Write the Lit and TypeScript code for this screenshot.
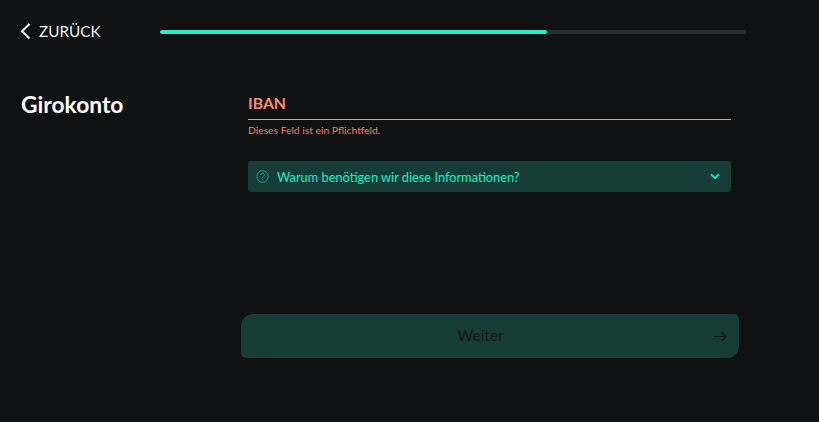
import { LitElement, html, css } from "lit";
import { customElement } from "lit/decorators.js";

@customElement("app-root")
export class AppRoot extends LitElement {
  static styles = css`
    :host { display: block; width: 819px; height: 422px; background: #0f1113; overflow: hidden; font-family: "Lato", "Noto Sans", sans-serif; color: #fff; }
    .top { display: flex; align-items: center; height: 34px; padding: 14px 0 0 20px; }
    .back { display: flex; align-items: center; gap: 8px; width: 140px; font-size: 15.3px; color: #f2f2f2; }
    .back svg { display: block; }
    .track { width: 586px; height: 4px; background: #2b2f2e; border-radius: 2px; margin-top: 2px; }
    .fill { width: 387px; height: 4px; background: #2cecc8; border-radius: 2px; }
    .main { display: flex; padding: 41px 0 0 21px; }
    h1 { margin: 0; width: 227px; font-size: 22.8px; line-height: 30px; font-weight: 700; color: #fff; }
    .form { width: 483px; }
    .label { height: 31px; padding-top: 3px; box-sizing: border-box; border-bottom: 1px solid #f59a80; font-size: 15.8px; line-height: 22px; font-weight: 700; color: #f98d6f; }
    .err { font-size: 10.3px; line-height: 12px; margin-top: 4px; color: #ff7a55; }
    .info { display: flex; align-items: center; height: 31px; margin-top: 25px; padding: 0 11px 0 8px; background: #153c37; border-radius: 3px; color: #16eec8; font-size: 12.8px; }
    .info .q { margin-right: 8px; display: block; }
    .info span { flex: 1; }
    .btn { display: flex; align-items: center; width: 498px; height: 44px; margin: 122px 0 0 241px; padding: 0 12px 0 0; box-sizing: border-box; background: #153c37; border-radius: 12px 5px 12px 5px; color: #15171a; font-size: 15.5px; line-height: 42px; }
    .btn span { flex: 1; text-align: center; padding: 0 0 2px 6px; }
  `;
  render() {
    return html`
      <div class="top">
        <div class="back">
          <svg width="11" height="16" viewBox="0 0 11 16" fill="none" stroke="#f2f2f2" stroke-width="2"><path d="M9.5 1 L2 8.2 L9.5 15.5"/></svg>
          ZURÜCK
        </div>
        <div class="track"><div class="fill"></div></div>
      </div>
      <div class="main">
        <h1>Girokonto</h1>
        <div class="form">
          <div class="label">IBAN</div>
          <div class="err">Dieses Feld ist ein Pflichtfeld.</div>
          <div class="info">
            <svg class="q" width="13" height="13" viewBox="0 0 13 13" fill="none" stroke="#1f9a90" stroke-width="1"><circle cx="6.5" cy="6.5" r="5.7"/><path d="M4.8 5.1a1.8 1.8 0 1 1 2.6 1.6c-.6.3-.9.7-.9 1.3"/><path d="M6.5 9.2v.8"/></svg>
            <span>Warum benötigen wir diese Informationen?</span>
            <svg width="10" height="7" viewBox="0 0 10 7" fill="none" stroke="#22d8bb" stroke-width="2"><path d="M1 1.2 L5 5 L9 1.2"/></svg>
          </div>
        </div>
      </div>
      <div class="btn">
        <span>Weiter</span>
        <svg width="13" height="11" viewBox="0 0 13 11" fill="none" stroke="#15171a" stroke-width="1.1"><path d="M0 5.5 H12 M7.5 1 L12 5.5 L7.5 10"/></svg>
      </div>
    `;
  }
}
